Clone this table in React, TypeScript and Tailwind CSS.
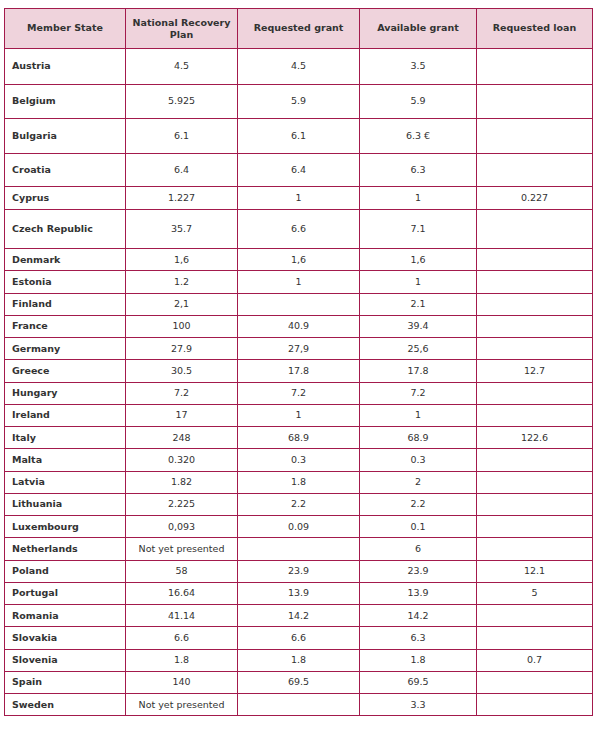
const rows: [string, string, string, string, string, string][] = [
  ["Austria", "4.5", "4.5", "3.5", "", "h-[36px]"],
  ["Belgium", "5.925", "5.9", "5.9", "", "h-[34px]"],
  ["Bulgaria", "6.1", "6.1", "6.3 €", "", "h-[35px]"],
  ["Croatia", "6.4", "6.4", "6.3", "", "h-[33px]"],
  ["Cyprus", "1.227", "1", "1", "0.227", "h-[23px]"],
  ["Czech Republic", "35.7", "6.6", "7.1", "", "h-[39px]"],
  ["Denmark", "1,6", "1,6", "1,6", "", "h-[22.25px]"],
  ["Estonia", "1.2", "1", "1", "", "h-[22.25px]"],
  ["Finland", "2,1", "", "2.1", "", "h-[22.25px]"],
  ["France", "100", "40.9", "39.4", "", "h-[22.25px]"],
  ["Germany", "27.9", "27,9", "25,6", "", "h-[22.25px]"],
  ["Greece", "30.5", "17.8", "17.8", "12.7", "h-[22.25px]"],
  ["Hungary", "7.2", "7.2", "7.2", "", "h-[22.25px]"],
  ["Ireland", "17", "1", "1", "", "h-[22.25px]"],
  ["Italy", "248", "68.9", "68.9", "122.6", "h-[22.25px]"],
  ["Malta", "0.320", "0.3", "0.3", "", "h-[22.25px]"],
  ["Latvia", "1.82", "1.8", "2", "", "h-[22.25px]"],
  ["Lithuania", "2.225", "2.2", "2.2", "", "h-[22.25px]"],
  ["Luxembourg", "0,093", "0.09", "0.1", "", "h-[22.25px]"],
  ["Netherlands", "Not yet presented", "", "6", "", "h-[22.25px]"],
  ["Poland", "58", "23.9", "23.9", "12.1", "h-[22.25px]"],
  ["Portugal", "16.64", "13.9", "13.9", "5", "h-[22.25px]"],
  ["Romania", "41.14", "14.2", "14.2", "", "h-[22.25px]"],
  ["Slovakia", "6.6", "6.6", "6.3", "", "h-[22.25px]"],
  ["Slovenia", "1.8", "1.8", "1.8", "0.7", "h-[22.25px]"],
  ["Spain", "140", "69.5", "69.5", "", "h-[22.25px]"],
  ["Sweden", "Not yet presented", "", "3.3", "", "h-[22.25px]"],
];

const cell = "border border-[#a31a4c] px-[7px] py-0";

export default function App() {
  return (
    <div className="min-h-screen bg-white pt-[8px] pl-[4px] font-['DejaVu_Sans',Verdana,sans-serif] text-[9.5px] text-[#333]">
      <table className="w-[588px] table-fixed border-collapse">
        <colgroup>
          <col className="w-[121px]" />
          <col className="w-[112px]" />
          <col className="w-[122px]" />
          <col className="w-[117px]" />
          <col className="w-[116px]" />
        </colgroup>
        <thead>
          <tr className="h-[40px] bg-[#efd3dc] font-bold">
            <th className={`${cell} text-center`}>Member State</th>
            <th className="border border-[#a31a4c] px-[2px] py-0 text-center leading-[12px] whitespace-nowrap">
              National Recovery
              <br />
              Plan
            </th>
            <th className={`${cell} text-center`}>Requested grant</th>
            <th className={`${cell} text-center`}>Available grant</th>
            <th className={`${cell} text-center`}>Requested loan</th>
          </tr>
        </thead>
        <tbody>
          {rows.map(([state, plan, req, avail, loan, h]) => (
            <tr key={state} className={h}>
              <td className={`${cell} text-left font-bold`}>{state}</td>
              <td className={`${cell} text-center`}>{plan}</td>
              <td className={`${cell} text-center`}>{req}</td>
              <td className={`${cell} text-center`}>{avail}</td>
              <td className={`${cell} text-center`}>{loan}</td>
            </tr>
          ))}
        </tbody>
      </table>
    </div>
  );
}
